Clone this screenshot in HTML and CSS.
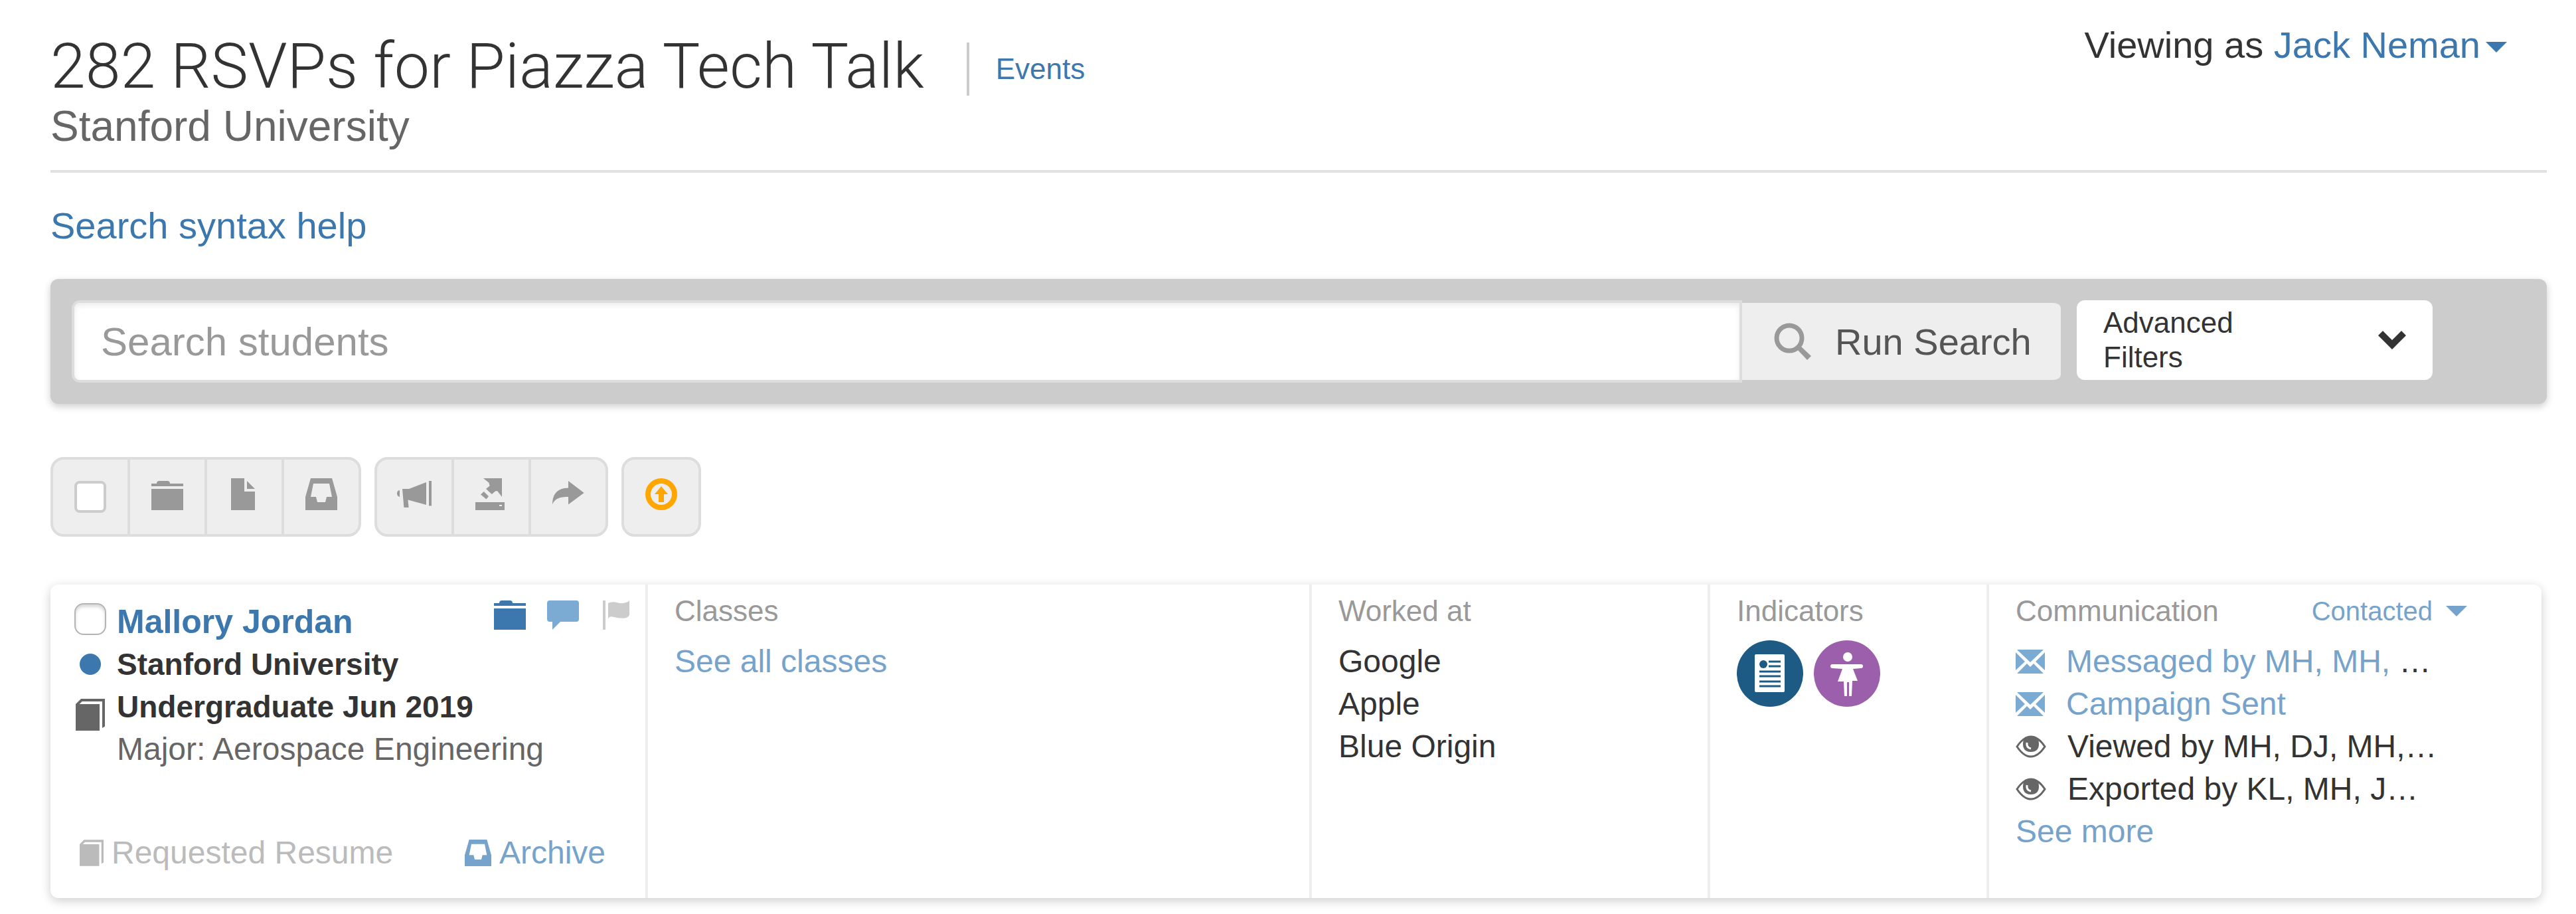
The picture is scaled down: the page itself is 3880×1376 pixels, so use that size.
FILE: index.html
```html
<!DOCTYPE html>
<html lang="en">
<head>
  <meta charset="UTF-8" />
  <title>282 RSVPs for Piazza Tech Talk</title>
  <link rel="stylesheet" href="styles.css">
</head>
<body>
  <!-- shared icons, drawn on a 12 unit grid -->
  <svg class="sprite" aria-hidden="true">
    <symbol id="i-folder" viewBox="0 0 12 12">
      <path d="M0 2h2q0-1 1-1h3q1 0 1 1h5v1H0zM0 4h12v8H0z"/>
    </symbol>
    <symbol id="i-inbox" viewBox="0 0 12 12">
      <path fill-rule="evenodd" d="M2 0h8l2 7v5H0V7zM3 2 2 7h2l.5 2h3L8 7h2L9 2z"/>
    </symbol>
    <symbol id="i-book" viewBox="0 0 11 12">
      <path d="M0 12V2l2-2h9v10.4l-1 .6V1H2.4l-1 1H9v10z"/>
    </symbol>
    <symbol id="i-mail" viewBox="0 0 44 36">
      <path d="M2 0h40L22 19zM0 4l14 14L0 31zM44 4v27L30 18zM2 36l15-15 5 5 5-5 15 15z"/>
    </symbol>
    <symbol id="i-eye" viewBox="0 0 46 36">
      <path fill="none" stroke="currentColor" stroke-width="3" d="M2 18Q12 3 23 3t21 15Q34 33 23 33T2 18z"/>
      <path d="M11 14Q11 2 23 2t12 12q0 12-12 12T11 14z"/>
      <path fill="none" stroke="#fff" stroke-width="3" d="M17 12q-1 8 6 9"/>
    </symbol>
  </svg>

  <header class="page-header">
    <div class="heading">
      <div class="title-row">
        <h1>282 RSVPs for Piazza Tech Talk</h1>
        <a class="crumb" href="#">Events</a>
      </div>
      <p class="school">Stanford University</p>
    </div>
    <div class="viewer">Viewing as <a href="#">Jack Neman<span class="caret"></span></a></div>
  </header>

  <a class="help" href="#">Search syntax help</a>

  <form class="search-bar">
    <input class="search-input" type="text" placeholder="Search students" aria-label="Search students">
    <button class="run" type="button">
      <svg viewBox="0 0 56 56"><circle cx="23" cy="23" r="19" fill="none" stroke="currentColor" stroke-width="7"/><path d="M34 39l5-5 17 16-6 6z"/></svg>
      Run Search
    </button>
    <button class="advanced" type="button">
      <span>Advanced<br>Filters</span>
      <svg viewBox="0 0 42 28"><path d="M0 7l7-7 14 14L35 0l7 7-21 21z"/></svg>
    </button>
  </form>

  <div class="toolbar">
    <div class="btn-group">
      <label class="tool tool-check"><input type="checkbox" aria-label="Select all"></label>
      <button class="tool" type="button" aria-label="Folder"><svg><use href="#i-folder"/></svg></button>
      <button class="tool" type="button" aria-label="Note"><svg viewBox="0 0 12 12"><path d="M1 0h5v5h4v7H1zM7 1l3 3H7z"/></svg></button>
      <button class="tool" type="button" aria-label="Archive"><svg><use href="#i-inbox"/></svg></button>
    </div>
    <div class="btn-group">
      <button class="tool" type="button" aria-label="Campaign">
        <svg class="wide" viewBox="0 0 13 12"><path d="M1 4.5Q0 4.6 0 5.7T1 7zM2 4h2.5L11 1.5V10L4.1 8.1l.3 2.9H2.6zM12 1h1v9.4h-1z"/></svg>
      </button>
      <button class="tool" type="button" aria-label="Export">
        <svg viewBox="0 0 12 12"><path fill-rule="evenodd" d="M3 0h7v7L8.3 4.8H7.6L6.2 6 4 4l1.4-1.1-.3-1.2zM3.2 5 5 6.8l-.9 1.1L2 6.1zM0 9h11v3H0zM9 10v.5h1V10z"/></svg>
      </button>
      <button class="tool" type="button" aria-label="Share">
        <svg viewBox="0 0 12 12"><path d="M0 9.8C0 5.8 2 3.7 6 3.6V1l5.9 4.5L6 9.9V7C3 7 1 7.5 0 9.8z"/></svg>
      </button>
    </div>
    <div class="btn-group">
      <button class="tool tool-up" type="button" aria-label="Upgrade">
        <svg viewBox="0 0 12 12"><circle cx="6" cy="6" r="5" fill="none" stroke="currentColor" stroke-width="2"/><path d="M6 3l2.5 3H7v3H5V6H3.5z"/></svg>
      </button>
    </div>
  </div>

  <article class="card">
    <section class="col student">
      <div class="line">
        <span class="mark"><input type="checkbox" aria-label="Select Mallory Jordan"></span>
        <a class="name" href="#">Mallory Jordan</a>
        <span class="actions">
          <svg class="folder"><use href="#i-folder"/></svg>
          <svg class="bubble" viewBox="0 0 12 12"><path d="M1 1h10q1 0 1 1v6q0 1-1 1H5l-3 3V9H1Q0 9 0 8V2q0-1 1-1z"/></svg>
          <svg class="flag" viewBox="0 0 10 12"><path d="M0 1h1v11H0zM2 2q1.5-.8 3.5-.2T9.5 1.5L10 1v5.5Q9.5 7.7 7.5 7.7T4 7.2 2 7.9z"/></svg>
        </span>
      </div>
      <div class="line strong"><span class="mark"><i class="dot"></i></span>Stanford University</div>
      <div class="line strong"><span class="mark"><svg class="book"><use href="#i-book"/></svg></span>Undergraduate Jun 2019</div>
      <div class="line major"><span class="mark"></span>Major: Aerospace Engineering</div>
      <div class="student-footer">
        <span class="requested"><svg><use href="#i-book"/></svg>Requested Resume</span>
        <a class="archive" href="#"><svg><use href="#i-inbox"/></svg>Archive</a>
      </div>
    </section>

    <section class="col">
      <h2>Classes</h2>
      <a class="soft" href="#">See all classes</a>
    </section>

    <section class="col">
      <h2>Worked at</h2>
      <ul>
        <li>Google</li>
        <li>Apple</li>
        <li>Blue Origin</li>
      </ul>
    </section>

    <section class="col">
      <h2>Indicators</h2>
      <div class="badges">
        <svg viewBox="0 0 100 100">
          <circle cx="50" cy="50" r="50" fill="#1d5b85"/>
          <rect x="27" y="21" width="45" height="57" rx="2" fill="#fff"/>
          <circle cx="40" cy="36" r="6" fill="#1d5b85"/>
          <path stroke="#1d5b85" stroke-width="3" d="M48 32h18M48 39h18M34 47h32M34 54h32M34 62h32M34 69h32"/>
        </svg>
        <svg viewBox="0 0 100 100">
          <circle cx="50" cy="50" r="50" fill="#9c5fab"/>
          <g fill="#fff">
            <circle cx="51" cy="25" r="7"/>
            <path d="M30 36h41q3 0 3 3t-3 3l-12 1 7 18h-8l-1 23h-4V63h-3v21h-4l-1-22h-9l7-19-15-1q-3 0-3-3t3-3z"/>
          </g>
        </svg>
      </div>
    </section>

    <section class="col communication">
      <div class="col-head">
        <h2>Communication</h2>
        <button class="status" type="button">Contacted<span class="caret"></span></button>
      </div>
      <ul>
        <li><svg class="mail"><use href="#i-mail"/></svg><span><a class="soft" href="#">Messaged by MH, MH,</a> …</span></li>
        <li><svg class="mail"><use href="#i-mail"/></svg><a class="soft" href="#">Campaign Sent</a></li>
        <li><svg class="eye"><use href="#i-eye"/></svg>Viewed by MH, DJ, MH,…</li>
        <li><svg class="eye"><use href="#i-eye"/></svg>Exported by KL, MH, J…</li>
      </ul>
      <a class="soft" href="#">See more</a>
    </section>
  </article>
</body>
</html>
```

FILE: styles.css
```css
* {
  box-sizing: border-box;
}
body {
  margin: 0;
  padding: 36px 44px 24px 76px;
  background: #fff;
  color: #333;
  font-family: "Liberation Sans", Arial, sans-serif;
  font-size: 48px;
  line-height: 64px;
}
h1, h2, p, ul {
  margin: 0;
  padding: 0;
  font-weight: normal;
}
ul {
  list-style: none;
}
a {
  color: #3c78ae;
  text-decoration: none;
}
button, input {
  margin: 0;
  font-family: inherit;
}
svg {
  display: block;
  flex: none;
  fill: currentColor;
}
.sprite {
  position: absolute;
  width: 0;
  height: 0;
}
.caret {
  display: inline-block;
  border: 16px solid transparent;
  border-top-color: currentColor;
  border-bottom: 0;
}

/* header */
.page-header {
  display: flex;
  justify-content: space-between;
  align-items: flex-start;
  padding-bottom: 28px;
  border-bottom: 4px solid #e1e1e1;
}
.heading {
  padding-top: 12px;
}
.title-row {
  display: flex;
  align-items: center;
}
h1 {
  font-family: Roboto, "Liberation Sans", sans-serif;
  font-size: 95px;
  font-weight: 300;
  line-height: 104px;
}
.crumb {
  margin: 8px 0 0 64px;
  padding-left: 40px;
  border-left: 4px solid #ccc;
  font-size: 44px;
  line-height: 80px;
}
.school {
  color: #666;
  font-size: 64px;
  line-height: 76px;
}
.viewer {
  padding-right: 60px;
  font-size: 56px;
  line-height: 64px;
}
.viewer .caret {
  margin: 0 0 8px 8px;
  vertical-align: baseline;
}
.help {
  display: block;
  margin: 48px 0;
  font-size: 56px;
}

/* search */
.search-bar {
  display: flex;
  align-items: flex-start;
  padding: 32px 172px 32px 32px;
  border-radius: 12px;
  background: #ccc;
  box-shadow: 0 4px 12px rgba(0, 0, 0, 0.2);
}
.search-input {
  flex: 1;
  min-width: 0;
  height: 124px;
  padding: 0 40px;
  border: 4px solid #ddd;
  border-radius: 12px 0 0 12px;
  background: #fff;
  box-shadow: inset 0 4px 8px rgba(0, 0, 0, 0.08);
  color: #333;
  font-size: 60px;
}
.search-input::placeholder {
  color: #999;
  opacity: 1;
}
.run {
  display: flex;
  align-items: center;
  gap: 36px;
  width: 480px;
  height: 124px;
  padding: 0 48px;
  border: 4px solid #ccc;
  border-width: 4px 0;
  border-radius: 0 12px 12px 0;
  background: #eee;
  color: #555;
  font-size: 56px;
  white-space: nowrap;
}
.run svg {
  width: 56px;
  height: 56px;
  color: #999;
}
.advanced {
  display: flex;
  justify-content: space-between;
  align-items: center;
  width: 536px;
  height: 120px;
  margin-left: 24px;
  padding: 0 40px;
  border: 0;
  border-radius: 12px;
  background: #fff;
  color: #333;
  font-size: 44px;
  line-height: 52px;
  text-align: left;
}
.advanced svg {
  width: 42px;
  height: 28px;
}

/* toolbar */
.toolbar {
  display: flex;
  gap: 20px;
  margin: 80px 0 72px;
}
.btn-group {
  display: flex;
  border: 4px solid #ddd;
  border-radius: 20px;
  background: #eee;
}
.tool {
  display: flex;
  justify-content: center;
  align-items: center;
  width: 116px;
  height: 112px;
  padding: 0 0 8px;
  border: 0;
  border-right: 4px solid #ddd;
  background: none;
  color: #999;
}
.tool:last-child {
  width: 112px;
  border-right: 0;
}
.tool svg {
  width: 48px;
  height: 48px;
}
.tool svg.wide {
  width: 52px;
}
.tool-check {
  padding: 0;
}
.tool-up {
  color: #ffa600;
}
input[type="checkbox"] {
  appearance: none;
  width: 48px;
  height: 48px;
  border: 4px solid #ccc;
  border-radius: 8px;
  background: #fff;
}

/* student card */
.card {
  display: grid;
  grid-template-columns: 225fr 250fr 150fr 105fr 208fr;
  margin-right: 8px;
  border-radius: 12px;
  background: #fff;
  box-shadow: 0 4px 16px rgba(0, 0, 0, 0.2);
}
.col {
  min-width: 0;
  padding: 8px 40px;
  border-right: 4px solid #eee;
}
.col:last-child {
  border-right: 0;
}
h2 {
  margin-bottom: 12px;
  color: #999;
  font-size: 44px;
}
.soft, .status, .archive {
  color: #76a3cb;
}

.student {
  padding: 24px 24px 36px 36px;
}
.line {
  display: flex;
  align-items: center;
  height: 64px;
  white-space: nowrap;
}
.mark {
  display: flex;
  justify-content: center;
  flex: none;
  width: 48px;
  margin-right: 16px;
}
.mark input[type="checkbox"] {
  margin-bottom: 8px;
  border: 2px solid #b4b4b4;
  border-radius: 14px;
  box-shadow: inset 0 4px 4px rgba(0, 0, 0, 0.15);
}
.dot {
  width: 32px;
  height: 32px;
  border-radius: 50%;
  background: #3c78ae;
}
.book {
  width: 44px;
  height: 48px;
  margin-top: 24px;
  color: #666;
}
.name {
  font-size: 50px;
  font-weight: bold;
}
.strong {
  font-size: 46px;
  font-weight: bold;
}
.major {
  color: #666;
}
.actions {
  display: flex;
  gap: 32px;
  margin: 0 0 24px auto;
}
.actions svg {
  width: 48px;
  height: 48px;
}
.actions .folder {
  color: #3c78ae;
}
.actions .bubble {
  color: #7babd3;
}
.actions .flag {
  width: 40px;
  margin-left: 4px;
  color: #ccc;
}
.student-footer {
  display: flex;
  justify-content: space-between;
  margin-top: 92px;
  padding: 0 36px 0 8px;
}
.requested, .archive {
  display: flex;
  align-items: center;
  gap: 12px;
}
.requested {
  color: #bbb;
}
.requested svg {
  width: 36px;
  height: 40px;
}
.archive svg {
  width: 40px;
  height: 40px;
}

.badges {
  display: flex;
  gap: 16px;
}
.badges svg {
  width: 100px;
  height: 100px;
}

.col-head {
  display: flex;
  justify-content: space-between;
  padding-right: 72px;
}
.status {
  display: flex;
  align-items: center;
  gap: 20px;
  height: 64px;
  padding: 0;
  border: 0;
  background: none;
  font-size: 40px;
}
.communication li {
  display: flex;
  align-items: center;
  gap: 32px;
  white-space: nowrap;
}
.mail {
  width: 44px;
  height: 36px;
  color: #7babd3;
}
.eye {
  width: 46px;
  height: 36px;
  color: #666;
}
```
